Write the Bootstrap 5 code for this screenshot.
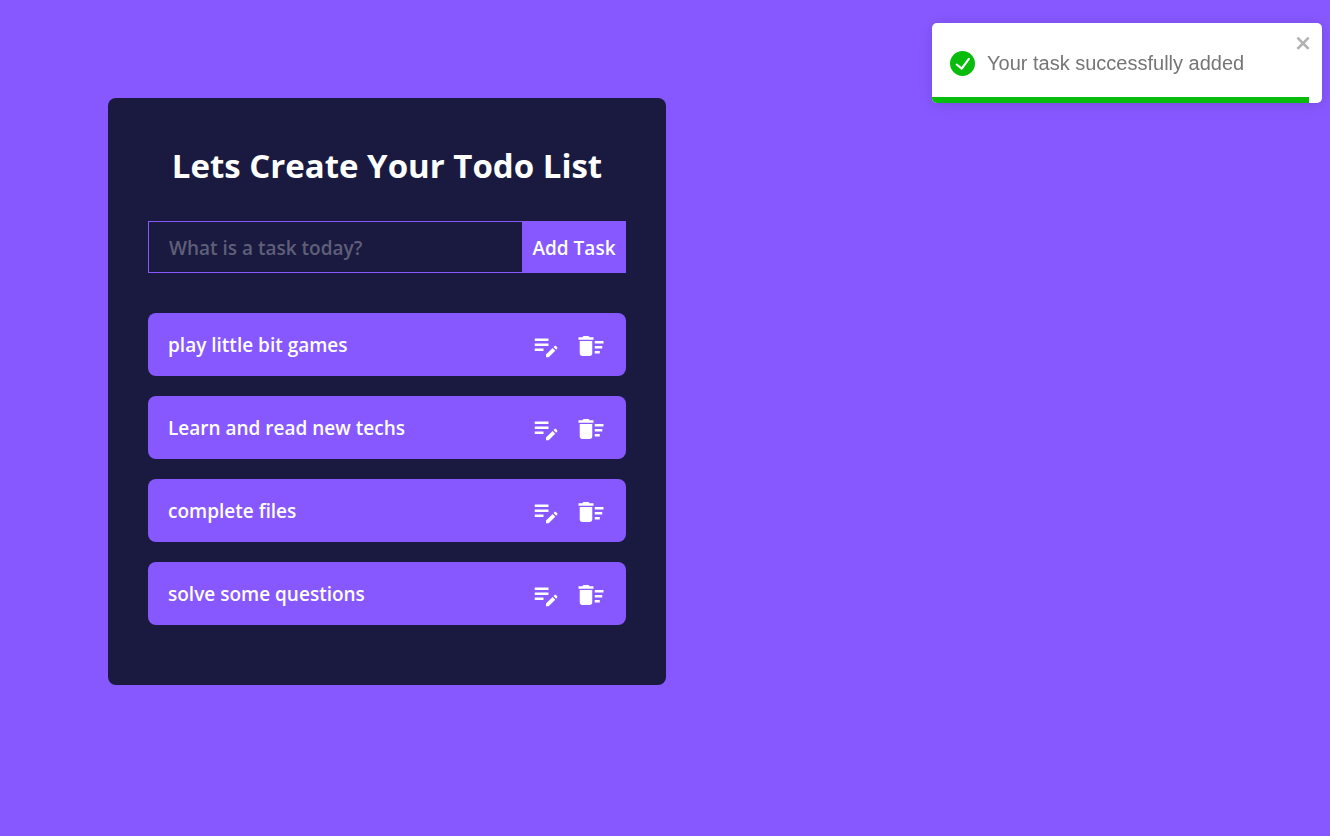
<!DOCTYPE html>
<html lang="en">
<head>
<meta charset="utf-8">
<meta name="viewport" content="width=device-width, initial-scale=1">
<title>Todo List</title>
<link href="https://cdn.jsdelivr.net/npm/bootstrap@5.3.0/dist/css/bootstrap.min.css" rel="stylesheet">
<style>
  :root { --violet: #8758ff; --navy: #1a1a40; }
  body { background: var(--violet); font-family: "Open Sans", "Noto Sans", sans-serif; }
  .todo-page { padding: 98px 20px 40px 108px; }
  .todo-panel { max-width: 558px; padding: 40px 40px 60px; background: var(--navy); border-radius: 8px; }
  .todo-title { font-size: 33px; line-height: 56px; font-weight: 700; margin-bottom: 27px; }
  .todo-form { height: 52px; margin-bottom: 40px; }
  .todo-form .form-control, .todo-form .btn { border: 1px solid var(--violet); font-size: 19px; font-weight: 600; }
  .todo-form .form-control { background: var(--navy); color: #fff; padding: 2px 20px 0; box-shadow: none; }
  .todo-form .form-control::placeholder { color: #5f5f79; opacity: 1; }
  .todo-form .btn { width: 104px; padding: 2px 0 0; background: var(--violet); color: #fff; white-space: nowrap; }
  .todo-items { gap: 20px; }
  .todo-item { min-height: 63px; padding: 2px 20px 0; border-radius: 8px; background: var(--violet); font-size: 19px; font-weight: 600; }
  .todo-actions { gap: 15px; padding-top: 1px; }
  .todo-actions svg { width: 30px; height: 30px; fill: #fff; }
  .toast-area { padding: 23px 8px; }
  .toast.task-toast { width: 390px; height: 80px; background: #fff; border: 0; border-radius: 5px; color: #757575; font: 20px/30px "Liberation Sans", sans-serif; box-shadow: 0 1px 12px rgba(0,0,0,.1), 0 3px 19px rgba(0,0,0,.05); }
  .toast-message { gap: 12px; padding: 0 18px; }
  .toast-close { top: 10px; right: 9px; line-height: 0; }
  .task-toast .progress { height: 6px; background: transparent; border-radius: 0; }
  .task-toast .progress-bar { background: #07bc0c; }
</style>
</head>
<body>
<svg class="d-none" aria-hidden="true">
  <symbol id="edit-note" viewBox="0 0 24 24"><path d="M3 10h11v2H3v-2zm0-2h11V6H3v2zm0 8h7v-2H3v2zm15.01-3.13.71-.71c.39-.39 1.02-.39 1.41 0l.71.71c.39.39.39 1.02 0 1.41l-.71.71-2.12-2.12zm-.71.71-5.3 5.3V21h2.12l5.3-5.3-2.12-2.12z"/></symbol>
  <symbol id="delete-sweep" viewBox="0 0 24 24"><path d="M15 16h4v2h-4zm0-8h7v2h-7zm0 4h6v2h-6zM3 18c0 1.1.9 2 2 2h6c1.1 0 2-.9 2-2V8H3v10zM14 5h-3l-1-1H6L5 5H2v2h12V5z"/></symbol>
</svg>

<main class="todo-page">
  <section class="todo-panel text-white">
    <h1 class="todo-title text-center">Lets Create Your Todo List</h1>
    <form class="todo-form d-flex" onsubmit="return false">
      <input type="text" class="form-control rounded-0 border-end-0 flex-grow-1" placeholder="What is a task today?" aria-label="Task">
      <button type="submit" class="btn rounded-0 flex-shrink-0">Add Task</button>
    </form>
    <ul class="todo-items list-unstyled d-flex flex-column mb-0">
      <li class="todo-item d-flex align-items-center justify-content-between">
        <span>play little bit games</span>
        <div class="todo-actions d-flex">
          <button type="button" class="btn p-0 border-0 lh-1" aria-label="Edit"><svg><use href="#edit-note"/></svg></button>
          <button type="button" class="btn p-0 border-0 lh-1" aria-label="Delete"><svg><use href="#delete-sweep"/></svg></button>
        </div>
      </li>
      <li class="todo-item d-flex align-items-center justify-content-between">
        <span>Learn and read new techs</span>
        <div class="todo-actions d-flex">
          <button type="button" class="btn p-0 border-0 lh-1" aria-label="Edit"><svg><use href="#edit-note"/></svg></button>
          <button type="button" class="btn p-0 border-0 lh-1" aria-label="Delete"><svg><use href="#delete-sweep"/></svg></button>
        </div>
      </li>
      <li class="todo-item d-flex align-items-center justify-content-between">
        <span>complete files</span>
        <div class="todo-actions d-flex">
          <button type="button" class="btn p-0 border-0 lh-1" aria-label="Edit"><svg><use href="#edit-note"/></svg></button>
          <button type="button" class="btn p-0 border-0 lh-1" aria-label="Delete"><svg><use href="#delete-sweep"/></svg></button>
        </div>
      </li>
      <li class="todo-item d-flex align-items-center justify-content-between">
        <span>solve some questions</span>
        <div class="todo-actions d-flex">
          <button type="button" class="btn p-0 border-0 lh-1" aria-label="Edit"><svg><use href="#edit-note"/></svg></button>
          <button type="button" class="btn p-0 border-0 lh-1" aria-label="Delete"><svg><use href="#delete-sweep"/></svg></button>
        </div>
      </li>
    </ul>
  </section>
</main>

<div class="toast-container toast-area position-fixed top-0 end-0">
  <div class="toast task-toast show position-relative overflow-hidden" role="alert">
    <div class="toast-message d-flex align-items-center h-100">
      <svg width="25" height="25" viewBox="0 0 24 24" fill="#07bc0c" aria-hidden="true"><path d="M12 0a12 12 0 1012 12A12.014 12.014 0 0012 0zm6.927 8.2l-6.845 9.289a1.011 1.011 0 01-1.43.188l-4.888-3.908a1 1 0 111.25-1.562l4.076 3.261 6.227-8.451a1 1 0 111.61 1.183z"/></svg>
      <span>Your task successfully added</span>
    </div>
    <button type="button" class="toast-close btn p-0 border-0 position-absolute" aria-label="Close">
      <svg width="18" height="20" viewBox="0 0 14 16" fill="#b2b2b2"><path fill-rule="evenodd" d="M7.71 8.23l3.75 3.75-1.48 1.48-3.75-3.75-3.75 3.75L1 11.98l3.75-3.75L1 4.48 2.48 3l3.75 3.75L9.98 3l1.48 1.48-3.75 3.75z"/></svg>
    </button>
    <div class="progress position-absolute bottom-0 start-0 w-100">
      <div class="progress-bar" style="width: 96.7%"></div>
    </div>
  </div>
</div>
<script src="https://cdn.jsdelivr.net/npm/bootstrap@5.3.0/dist/js/bootstrap.bundle.min.js"></script>
</body>
</html>
